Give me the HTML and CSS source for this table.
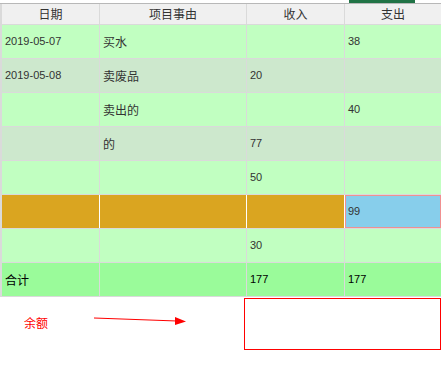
FILE: index.html
```html
<!DOCTYPE html>
<html lang="zh">
<head>
<meta charset="utf-8">
<link rel="stylesheet" href="styles.css">
</head>
<body>
<div class="topbar"><div class="tab"></div></div>
<div class="sheet">
  <div class="cell head">日期</div>
  <div class="cell head">项目事由</div>
  <div class="cell head">收入</div>
  <div class="cell head">支出</div>

  <div class="cell a num">2019-05-07</div>
  <div class="cell a">买水</div>
  <div class="cell a num"></div>
  <div class="cell a num">38</div>

  <div class="cell b num">2019-05-08</div>
  <div class="cell b">卖废品</div>
  <div class="cell b num">20</div>
  <div class="cell b num"></div>

  <div class="cell a num"></div>
  <div class="cell a">卖出的</div>
  <div class="cell a num"></div>
  <div class="cell a num">40</div>

  <div class="cell b num"></div>
  <div class="cell b">的</div>
  <div class="cell b num">77</div>
  <div class="cell b num"></div>

  <div class="cell a num"></div>
  <div class="cell a"></div>
  <div class="cell a num">50</div>
  <div class="cell a num"></div>

  <div class="cell gold edge-l"></div>
  <div class="cell gold edge"></div>
  <div class="cell gold edge"></div>
  <div class="cell sky num edge">99</div>

  <div class="cell a num"></div>
  <div class="cell a"></div>
  <div class="cell a num">30</div>
  <div class="cell a num"></div>

  <div class="cell total">合计</div>
  <div class="cell total"></div>
  <div class="cell total num">177</div>
  <div class="cell total num">177</div>
</div>
<div class="below">
  <div class="label">余额</div>
  <svg class="arrow" width="100" height="12" viewBox="0 0 100 12">
    <line x1="1" y1="2" x2="84" y2="5" stroke="#ff0000" stroke-width="1.2"/>
    <polygon points="82,1 93,5.5 82,9" fill="#ff0000"/>
  </svg>
  <div class="box"></div>
</div>
</body>
</html>
```
FILE: styles.css
```css
html, body {
  margin: 0;
  padding: 0;
  background: #ffffff;
}
body {
  width: 441px;
  font-family: "Noto Sans CJK SC", "Liberation Sans", sans-serif;
  font-size: 12px;
  color: #333333;
}
.topbar {
  height: 3px;
  border-bottom: 1px solid #b8b8b8;
  position: relative;
}
.tab {
  position: absolute;
  left: 349px;
  top: 0;
  width: 66px;
  height: 3px;
  background: #217346;
}
.sheet {
  display: grid;
  grid-template-columns: 97px 146px 97px 1fr;
  grid-template-rows: 20px repeat(8, 33px);
  gap: 1px;
  padding-left: 2px;
  background: #dadada;
  border-bottom: 1px solid #dadada;
}
.cell {
  display: flex;
  align-items: center;
  padding-left: 3px;
  line-height: 1;
  white-space: nowrap;
}
.head {
  background: #f0f0f0;
  justify-content: center;
  padding-left: 0;
  color: #333333;
}
.a { background: #c1ffc1; }
.b { background: #cde8cd; }
.gold { background: #daa520; }
.sky {
  background: #87ceeb;
  box-shadow: inset 0 0 0 1px #f09090;
}
.edge { box-shadow: -1px 0 0 #ffffff; }
.sky.edge { box-shadow: inset 0 0 0 1px #f09090, -1px 0 0 #ffffff; }
.total {
  background: #9afb9a;
  color: #000000;
}
.num {
  font-family: "Liberation Sans", "DejaVu Sans", sans-serif;
  font-size: 11px;
  padding-left: 3px;
}
.below {
  display: flex;
  align-items: flex-start;
  height: 90px;
}
.label {
  color: #ff0000;
  margin-left: 24px;
  margin-top: 17px;
}
.arrow {
  margin-left: 45px;
  margin-top: 19px;
}
.box {
  margin-left: auto;
  margin-top: 1px;
  width: 195px;
  height: 50px;
  border: 1px solid #ff0000;
}
```
